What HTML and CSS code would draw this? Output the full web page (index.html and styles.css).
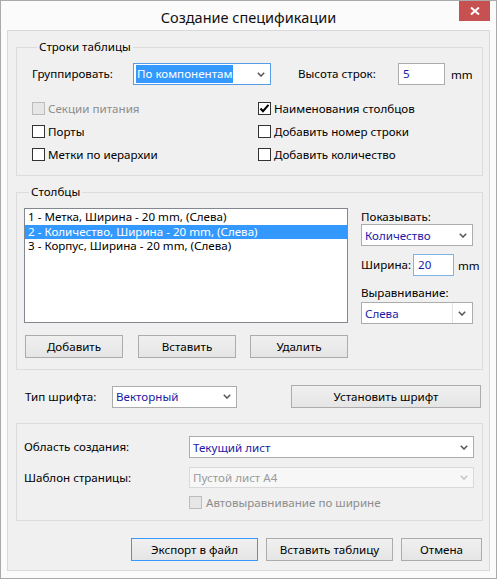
FILE: index.html
```html
<!DOCTYPE html>
<html lang="ru">
<head>
<meta charset="utf-8">
<title>Создание спецификации</title>
<link rel="stylesheet" href="styles.css">
</head>
<body>
<div class="window">
  <div class="titlebar">
    <div></div>
    <div class="title">Создание спецификации</div>
    <div class="close"><svg width="10" height="8" viewBox="0 0 10 8"><path d="M1 0.5 L9 7.5 M9 0.5 L1 7.5" stroke="#fff" stroke-width="2"/></svg></div>
  </div>
  <div class="client">
    <div class="group g1">
      <div class="gtitle">Строки таблицы</div>
      <div class="row1">
        <div class="lbl w101">Группировать:</div>
        <div class="combo focus w138"><span class="sel">По компонентам</span><span class="arrow"><svg width="8" height="5" viewBox="0 0 8 5"><path d="M0.8 0.8 L4 4 L7.2 0.8" fill="none" stroke="#5a5a5a" stroke-width="1.6"/></svg></span></div>
        <div class="lbl hlbl">Высота строк:</div>
        <div class="input w47">5</div>
        <div class="unit">mm</div>
      </div>
      <div class="checks">
        <div class="check disabled"><span class="box"></span>Секции питания</div>
        <div class="check"><span class="box"><svg width="11" height="11" viewBox="0 0 11 11"><path d="M1.5 5.5 L4 8.2 L9.5 1.8" fill="none" stroke="#000" stroke-width="2"/></svg></span>Наименования столбцов</div>
        <div class="check"><span class="box"></span>Порты</div>
        <div class="check"><span class="box"></span>Добавить номер строки</div>
        <div class="check"><span class="box"></span>Метки по иерархии</div>
        <div class="check"><span class="box"></span>Добавить количество</div>
      </div>
    </div>

    <div class="group g2">
      <div class="gtitle">Столбцы</div>
      <div class="cols">
        <div class="cols-left">
          <div class="listbox">
            <div class="item">1 - Метка, Ширина - 20 mm, (Слева)</div>
            <div class="item selected">2 - Количество, Ширина - 20 mm, (Слева)</div>
            <div class="item">3 - Корпус, Ширина - 20 mm, (Слева)</div>
          </div>
          <div class="btnrow">
            <div class="btn w98">Добавить</div>
            <div class="btn w98 ml15">Вставить</div>
            <div class="btn w98 ml14">Удалить</div>
          </div>
        </div>
        <div class="cols-right">
          <div class="slbl">Показывать:</div>
          <div class="combo w112"><span class="val">Количество</span><span class="arrow"><svg width="8" height="5" viewBox="0 0 8 5"><path d="M0.8 0.8 L4 4 L7.2 0.8" fill="none" stroke="#5a5a5a" stroke-width="1.6"/></svg></span></div>
          <div class="wrow">
            <div class="lbl">Ширина:</div>
            <div class="input hover w40">20</div>
            <div class="unit">mm</div>
          </div>
          <div class="slbl s2">Выравнивание:</div>
          <div class="combo w112 split"><span class="val">Слева</span><span class="arrow sep"><svg width="8" height="5" viewBox="0 0 8 5"><path d="M0.8 0.8 L4 4 L7.2 0.8" fill="none" stroke="#5a5a5a" stroke-width="1.6"/></svg></span></div>
        </div>
      </div>
    </div>

    <div class="fontrow">
      <div class="lbl w87">Тип шрифта:</div>
      <div class="combo w125"><span class="val">Векторный</span><span class="arrow"><svg width="8" height="5" viewBox="0 0 8 5"><path d="M0.8 0.8 L4 4 L7.2 0.8" fill="none" stroke="#5a5a5a" stroke-width="1.6"/></svg></span></div>
      <div class="btn w190 fontbtn">Установить шрифт</div>
    </div>

    <div class="group g3">
      <div class="frow">
        <div class="lbl w165">Область создания:</div>
        <div class="combo w285"><span class="val">Текущий лист</span><span class="arrow"><svg width="8" height="5" viewBox="0 0 8 5"><path d="M0.8 0.8 L4 4 L7.2 0.8" fill="none" stroke="#5a5a5a" stroke-width="1.6"/></svg></span></div>
      </div>
      <div class="frow r2">
        <div class="lbl w165">Шаблон страницы:</div>
        <div class="combo w285 dis"><span class="val">Пустой лист А4</span><span class="arrow"><svg width="8" height="5" viewBox="0 0 8 5"><path d="M0.8 0.8 L4 4 L7.2 0.8" fill="none" stroke="#c4c4c4" stroke-width="1.6"/></svg></span></div>
      </div>
      <div class="check disabled autow"><span class="box"></span>Автовыравнивание по ширине</div>
    </div>

    <div class="bottom">
      <div class="btn w127 default">Экспорт в файл</div>
      <div class="btn w127">Вставить таблицу</div>
      <div class="btn w81">Отмена</div>
    </div>
  </div>
</div>
</body>
</html>
```
FILE: styles.css
```css
* { box-sizing: border-box; }
html, body { margin: 0; padding: 0; }
body {
  font-family: "Noto Sans", "Liberation Sans", sans-serif;
  font-size: 11.6px;
  color: #000;
  background: #fff;
}
.window {
  width: 497px;
  height: 579px;
  border: 1px solid #aaaaaa;
  background: #fbfbfb;
  display: flex;
  flex-direction: column;
  padding: 0 6px 7px 6px;
}
.titlebar {
  height: 29px;
  flex: none;
  display: grid;
  grid-template-columns: 1fr auto 1fr;
  align-items: start;
}
.title {
  font-size: 14.5px;
  line-height: 20px;
  padding-top: 6px;
  color: #111;
}
.close {
  justify-self: end;
  width: 31px;
  height: 20px;
  background: #c75050;
  display: flex;
  align-items: center;
  justify-content: center;
}
.client {
  flex: 1;
  border: 1px solid #d9d9d9;
  background: #f0f0f0;
  padding: 0 6px 0 8px;
}
.group {
  border: 1px solid #dcdcdc;
}
.gtitle {
  margin: -9px 0 0 5px;
  padding: 0 2px;
  background: #f0f0f0;
  width: max-content;
  line-height: 16px;
}
.g1 { margin-top: 16px; padding: 0 0 9px 15px; }
.lbl { line-height: 16px; white-space: nowrap; }
.w101 { width: 101px; flex: none; }
.w87 { width: 87px; flex: none; }
.w165 { width: 165px; flex: none; }
.w138 { width: 138px; }
.w47 { width: 47px; }
.w40 { width: 41px; }
.w112 { width: 112px; }
.w125 { width: 125px; }
.w285 { width: 285px; }
.w98 { width: 98px; }
.w127 { width: 127px; }
.w81 { width: 81px; }
.w190 { width: 190px; }
.ml15 { margin-left: 15px; }
.ml14 { margin-left: 14px; }

.row1 {
  margin-top: 8px;
  display: flex;
  align-items: center;
  height: 22px;
}
.hlbl { margin-left: 27px; width: 100px; flex: none; }
.unit { margin-left: 6px; color: #000; }

.combo {
  flex: none;
  height: 22px;
  border: 1px solid #acacac;
  background: #fff;
  display: flex;
  align-items: center;
  padding: 0 5px 0 2px;
}
.combo.focus { border-color: #569de5; }
.combo .val { flex: 1; color: #1a1aa6; padding-left: 1px; white-space: nowrap; }
.combo .sel {
  background: #3399ff;
  color: #fff;
  padding: 1px 1px 2px 1px;
  line-height: 15px;
  margin-right: auto;
}
.combo .arrow { display: flex; align-items: center; height: 100%; }
.combo.split { padding-right: 0; }
.combo .arrow.sep {
  border-left: 1px solid #e3e3e3;
  padding: 0 6px 0 5px;
}
.combo.dis { background: #f7f7f7; border-color: #d9d9d9; }
.combo.dis .val { color: #9a9a9a; }

.input {
  flex: none;
  height: 22px;
  border: 1px solid #acacac;
  background: #fff;
  color: #1a1aa6;
  padding: 0 4px;
  line-height: 20px;
}
.input.hover { border-color: #7eb4ea; }

.checks {
  margin-top: 12px;
  display: grid;
  grid-template-columns: 226px auto;
  grid-auto-rows: 23px;
}
.check {
  display: flex;
  align-items: center;
  gap: 3px;
  white-space: nowrap;
}
.box {
  width: 13px;
  height: 13px;
  border: 1px solid #333;
  background: #fff;
  display: flex;
  align-items: center;
  justify-content: center;
  flex: none;
}
.check.disabled { color: #8d8d8d; }
.check.disabled .box { border-color: #bcbcbc; background: #e6e6e6; }

.g2 { margin-top: 16px; padding: 0 0 11px 7px; }
.cols { display: flex; margin-top: 8px; }
.cols-left { width: 324px; flex: none; }
.listbox {
  height: 115px;
  border: 1px solid #828790;
  background: #fff;
  padding: 1px 0 0 0;
}
.item {
  line-height: 14.5px;
  height: 14.5px;
  padding-left: 3px;
  white-space: nowrap;
  overflow: hidden;
}
.item.selected { background: #3399ff; color: #fff; }
.btnrow { display: flex; margin-top: 12px; padding-left: 1px; }
.btn {
  flex: none;
  height: 23px;
  border: 1px solid #acacac;
  background: linear-gradient(#f0f0f0, #e5e5e5);
  display: flex;
  align-items: center;
  justify-content: center;
  white-space: nowrap;
}
.btn.default { border-color: #3399ff; }

.cols-right { margin-left: 13px; width: 112px; flex: none; padding-top: 2px; }
.slbl { line-height: 14px; }
.wrow { display: flex; align-items: center; margin-top: 8px; height: 22px; }
.wrow .lbl { width: 52px; flex: none; }
.wrow .unit { margin-left: 4px; }
.slbl.s2 { margin-top: 10px; margin-bottom: 2px; }

.fontrow {
  margin-top: 15px;
  display: flex;
  align-items: center;
  padding-left: 9px;
  height: 23px;
}
.fontbtn { margin-left: 54px; }

.g3 { margin-top: 15px; padding: 12px 0 11px 7px; }
.frow { display: flex; align-items: center; }
.frow.r2 { margin-top: 9px; }
.frow.r2 .combo { height: 21px; }
.autow { margin-top: 7px; padding-left: 165px; gap: 4px; height: 14px; }

.bottom {
  margin-top: 17px;
  display: flex;
  justify-content: flex-end;
  gap: 8px;
  padding-right: 1px;
}
```
